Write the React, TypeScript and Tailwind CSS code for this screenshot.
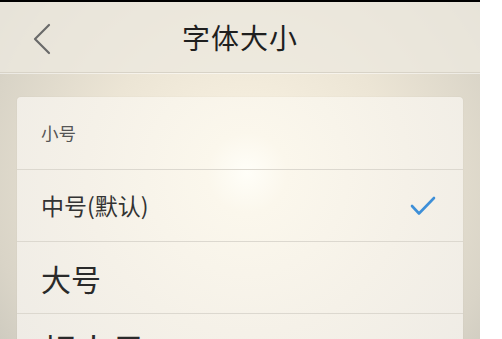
import { useState } from 'react'

const sizes = [
  { label: '小号', cls: 'text-[17.5px] text-[#555]' },
  { label: '中号(默认)', cls: 'text-[23px] text-[#333]' },
  { label: '大号', cls: 'text-[30px] text-[#2a2a2a]' },
  { label: '超大号', cls: 'text-[35px] text-[#2a2a2a]' },
]

export default function App() {
  const [selected, setSelected] = useState(1)

  return (
    <div className="w-[502px] h-[339px] bg-white flex overflow-hidden font-['Noto_Sans_CJK_SC','Noto_Sans',sans-serif]">
      <div className="w-[480px] h-full flex flex-col bg-[radial-gradient(circle_at_247px_173px,#fffcf2_0px,#f6efdf_50px,#ece5d5_150px,#d9d4c7_260px,#c4c2b8_340px)]">
        <div className="h-[2px] bg-black shrink-0" />

        {/* Header */}
        <div className="h-[71px] shrink-0 relative flex items-center justify-center bg-[#ece8de]/80 border-b border-[#d8d3c7] shadow-[0_1px_0_rgba(255,255,255,0.5)]">
          <button className="absolute left-[32px] top-[20px] w-[20px] h-[34px] flex items-center">
            <svg width="20" height="34" viewBox="0 0 20 34" fill="none">
              <path d="M17 3 L3 17 L17 31" stroke="#6a6a6a" strokeWidth="2.2" strokeLinecap="round" strokeLinejoin="round" />
            </svg>
          </button>
          <h1 className="text-[28px] text-[#1f1f1f] tracking-[1px] leading-none">字体大小</h1>
        </div>

        {/* Options */}
        <div className="mt-[24px] mx-[17px] rounded-[4px] bg-[radial-gradient(circle_at_230px_76px,#fffef8_0px,#fbf7ec_40px,#f5f1e8_160px,#eeebe5_300px)] shadow-[0_0_2px_rgba(0,0,0,0.06)]">
          {sizes.map((s, i) => (
            <div
              key={s.label}
              onClick={() => setSelected(i)}
              className={`h-[72px] flex items-center justify-between pl-[24px] pr-[26px] ${i > 0 ? 'border-t border-[#dcd8cf]' : ''}`}
            >
              <span className={`${s.cls} leading-none`}>{s.label}</span>
              {selected === i && (
                <svg width="28" height="22" viewBox="0 0 28 22" fill="none">
                  <path d="M3 11 L10 18.5 L25 3" stroke="#3d8fd8" strokeWidth="2.6" strokeLinecap="round" strokeLinejoin="round" />
                </svg>
              )}
            </div>
          ))}
        </div>
      </div>
    </div>
  )
}
